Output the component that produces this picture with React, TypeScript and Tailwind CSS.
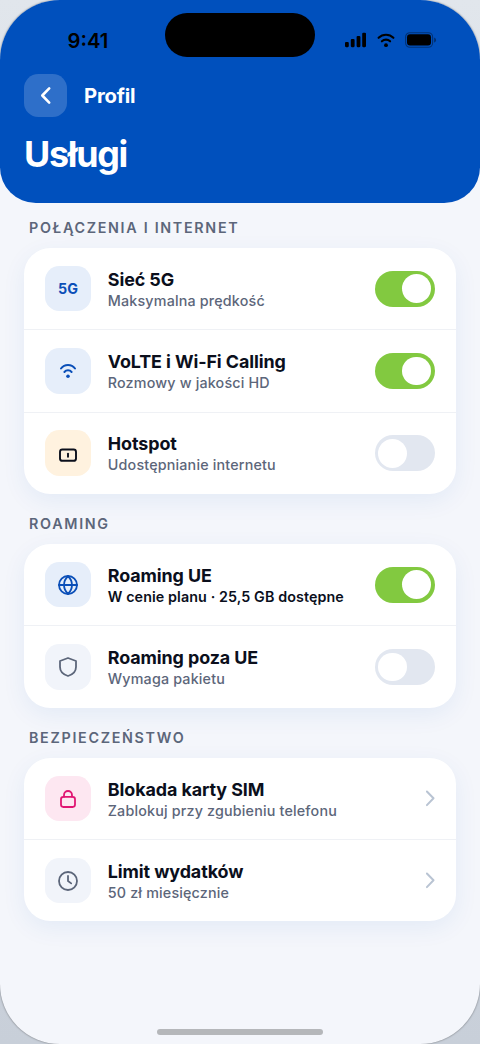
import type { ReactNode } from "react";

interface RowProps {
  icon: ReactNode;
  /** Background and text colour of the icon tile. */
  tile: string;
  title: string;
  subtitle: string;
  subtitleClass?: string;
  /** Draws a switch when set, a chevron otherwise. */
  on?: boolean;
}

function Icon({ children, strokeWidth = 1.8 }: { children: ReactNode; strokeWidth?: number }) {
  return (
    <svg
      width="24"
      height="24"
      viewBox="0 0 24 24"
      fill="none"
      stroke="currentColor"
      strokeWidth={strokeWidth}
      strokeLinecap="round"
      strokeLinejoin="round"
      aria-hidden="true"
    >
      {children}
    </svg>
  );
}

function Toggle({ on }: { on: boolean }) {
  return (
    <button
      type="button"
      role="switch"
      aria-checked={on}
      className={`flex h-[35.8px] w-[59.7px] shrink-0 items-center rounded-full px-[3.5px] ${
        on ? "justify-end bg-[#82c940]" : "justify-start bg-[#e2e7f0]"
      }`}
    >
      <span className="size-[28.7px] rounded-full bg-white" />
    </button>
  );
}

function Row({ icon, tile, title, subtitle, subtitleClass = "font-medium tracking-[0.18px] text-[#5c667a]", on }: RowProps) {
  return (
    <div className="flex h-[82.3px] items-center border-b-[1.2px] border-[#eff1f5] pr-[21.5px] pl-[21.3px] last:h-[81.2px] last:border-b-0">
      <div className={`flex size-[45.4px] shrink-0 items-center justify-center rounded-[14.3px] ${tile}`}>{icon}</div>
      <div className="ml-[17.1px] flex-1 pt-[2.2px] whitespace-nowrap">
        <div className="text-[17.9px] leading-[21px] font-bold tracking-[-0.09px] text-[#0b0f1c]">{title}</div>
        <div className={`text-[14.3px] leading-[21px] ${subtitleClass}`}>{subtitle}</div>
      </div>
      {on === undefined ? (
        <svg width="9" height="17" viewBox="0 0 9 17" fill="none" className="text-[#b9c4d3]" aria-hidden="true">
          <path d="M0.9 1.5L7.5 8.3L0.9 15.1" stroke="currentColor" strokeWidth="2" strokeLinecap="round" strokeLinejoin="round" />
        </svg>
      ) : (
        <Toggle on={on} />
      )}
    </div>
  );
}

function Section({ title, children }: { title: string; children: ReactNode }) {
  return (
    <section>
      <h2 className="flex h-[50.3px] items-center pt-[10px] pl-[5px] text-[14.3px] font-semibold tracking-[1.7px] text-[#5c667a]">
        {title}
      </h2>
      <div className="overflow-hidden rounded-[26.3px] bg-white shadow-[0_7px_24px_rgba(0,80,190,0.07)]">{children}</div>
    </section>
  );
}

function StatusBar() {
  return (
    <div className="flex h-[74px] justify-between pr-[43px] pl-[67.5px]">
      <div className="mt-[29px] h-6 text-[20.3px] leading-6 font-semibold">9:41</div>
      <div className="mt-[32px] flex h-4 items-center">
        <svg width="22" height="16" viewBox="0 0 22 16" fill="currentColor" aria-hidden="true">
          <rect x="0" y="10" width="3.8" height="5.2" rx="1.1" />
          <rect x="5.8" y="7" width="3.8" height="8.2" rx="1.1" />
          <rect x="11.6" y="4" width="3.8" height="11.2" rx="1.1" />
          <rect x="17.2" y="0.7" width="3.8" height="14.5" rx="1.1" />
        </svg>
        <svg width="18" height="16" viewBox="0 0 18 16" fill="none" stroke="currentColor" strokeLinecap="round" className="ml-[10px]" aria-hidden="true">
          <path d="M1.6 5.8a10.4 10.4 0 0114.8 0" strokeWidth="2.1" />
          <path d="M4.9 9.3a5.9 5.9 0 018.2 0" strokeWidth="2.1" />
          <circle cx="9" cy="13.2" r="1.9" fill="currentColor" stroke="none" />
        </svg>
        <svg width="32" height="16" viewBox="0 0 32 16" className="ml-[10px]" aria-hidden="true">
          <rect x="0.6" y="0.7" width="27" height="14.6" rx="4.3" fill="none" stroke="currentColor" strokeOpacity=".38" strokeWidth="1.1" />
          <rect x="2" y="2.3" width="24" height="11.3" rx="3" fill="currentColor" />
          <path d="M29.1 5.4c1.3.5 2 1.4 2 2.6s-.7 2.1-2 2.6z" fill="currentColor" fillOpacity=".42" />
        </svg>
      </div>
    </div>
  );
}

export default function App() {
  return (
    <div className="h-[1044px] w-[480px] overflow-hidden bg-linear-to-b from-[#e1e6ec] to-[#c8cfd9] font-['Inter','Liberation_Sans',sans-serif]">
      <div className="relative h-full overflow-hidden rounded-[60px] bg-[#f4f6fb] shadow-[0_0_2px_rgba(0,0,0,0.5)]">
        <header className="h-[202.5px] rounded-b-[35.8px] bg-[#0050bd]">
          <StatusBar />
          <div className="flex items-center pl-6 text-white">
            <button
              type="button"
              aria-label="Wstecz"
              className="flex size-[43px] items-center justify-center rounded-[14.3px] bg-white/18"
            >
              <svg width="12" height="19" viewBox="0 0 12 19" fill="none" aria-hidden="true">
                <path d="M9.2 2.4L2.3 9.5L9.2 16.6" stroke="currentColor" strokeWidth="2.6" strokeLinecap="round" strokeLinejoin="round" />
              </svg>
            </button>
            <span className="ml-[17px] pt-px text-[20.3px] leading-6 font-bold tracking-[-0.2px]">Profil</span>
          </div>
          <h1 className="mt-[15.5px] pl-6 text-[35.8px] leading-[43px] font-bold tracking-[-1.25px] text-white">Usługi</h1>
        </header>

        {/* Dynamic island */}
        <div className="absolute top-[13px] left-[165px] h-[44px] w-[150px] rounded-full bg-black" />

        <main className="-mt-[4.8px] px-6">
          <Section title="POŁĄCZENIA I INTERNET">
            <Row
              icon={<span className="text-[14.3px] font-bold">5G</span>}
              tile="bg-[#e6eefa] text-[#0b4fb8]"
              title="Sieć 5G"
              subtitle="Maksymalna prędkość"
              on
            />
            <Row
              icon={
                <Icon strokeWidth={2}>
                  <path d="M5 9.5a8.7 8.7 0 0114 0" />
                  <path d="M8.4 13a4.8 4.8 0 017.2 0" />
                  <circle cx="12" cy="17.3" r="1.8" fill="currentColor" stroke="none" />
                </Icon>
              }
              tile="bg-[#e6eefa] text-[#0b4fb8]"
              title="VoLTE i Wi-Fi Calling"
              subtitle="Rozmowy w jakości HD"
              on
            />
            <Row
              icon={
                <Icon strokeWidth={1.9}>
                  <rect x="4" y="8.5" width="16" height="11.3" rx="2.4" />
                  <path d="M12 12.6v3.2" />
                </Icon>
              }
              tile="bg-[#fff2df] text-[#0b0f1c]"
              title="Hotspot"
              subtitle="Udostępnianie internetu"
              on={false}
            />
          </Section>

          <Section title="ROAMING">
            <Row
              icon={
                <Icon>
                  <circle cx="12" cy="12" r="9" />
                  <path d="M3 12h18M12 3c-5.3 5.3-5.3 12.7 0 18M12 3c5.3 5.3 5.3 12.7 0 18" />
                </Icon>
              }
              tile="bg-[#e6eefa] text-[#0b4fb8]"
              title="Roaming UE"
              subtitle="W cenie planu · 25,5 GB dostępne"
              subtitleClass="font-semibold tracking-[0.1px] text-[#0b0f1c]"
              on
            />
            <Row
              icon={
                <Icon>
                  <path d="M12 3l8 3v6c0 4.7-3.4 7.6-8 9-4.6-1.4-8-4.3-8-9V6z" />
                </Icon>
              }
              tile="bg-[#f1f4fa] text-[#5c667a]"
              title="Roaming poza UE"
              subtitle="Wymaga pakietu"
              on={false}
            />
          </Section>

          <Section title="BEZPIECZEŃSTWO">
            <Row
              icon={
                <Icon>
                  <rect x="5" y="9.8" width="14" height="10.2" rx="2.4" />
                  <path d="M8 9.8V8a4 4 0 018 0V9.8" />
                </Icon>
              }
              tile="bg-[#fde7f1] text-[#e01673]"
              title="Blokada karty SIM"
              subtitle="Zablokuj przy zgubieniu telefonu"
            />
            <Row
              icon={
                <Icon>
                  <circle cx="12" cy="12" r="9" />
                  <path d="M12 7v5l3.2 2.4" />
                </Icon>
              }
              tile="bg-[#f1f4fa] text-[#5c667a]"
              title="Limit wydatków"
              subtitle="50 zł miesięcznie"
            />
          </Section>
        </main>

        {/* Home indicator */}
        <div className="absolute bottom-[9.5px] left-[157px] h-[6px] w-[166px] rounded-full bg-[#b5b7ba]" />
      </div>
    </div>
  );
}
